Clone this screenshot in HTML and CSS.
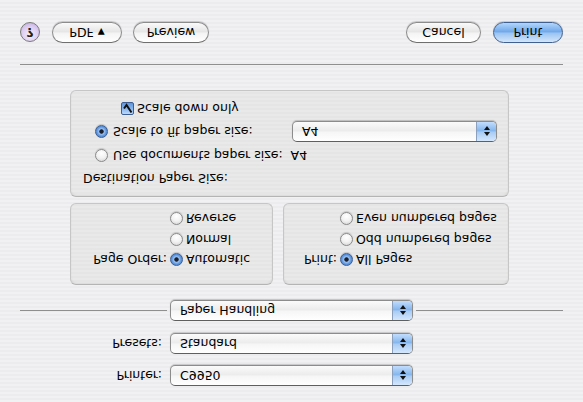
FILE: index.html
```html
<!DOCTYPE html>
<html>
<head>
<meta charset="utf-8">
<title>Print</title>
<link rel="stylesheet" href="styles.css">
</head>
<body>
<div class="dialog">
  <div class="fields">
    <div class="field">
      <span class="flabel">Printer:</span>
      <div class="popup"><span class="ptext">C9950</span><span class="parrow"><svg width="8" height="12" viewBox="0 0 8 12"><path d="M4 1 L7 5 L1 5 Z M4 11 L7 7 L1 7 Z" fill="#111"/></svg></span></div>
    </div>
    <div class="field presets">
      <span class="flabel">Presets:</span>
      <div class="popup"><span class="ptext">Standard</span><span class="parrow"><svg width="8" height="12" viewBox="0 0 8 12"><path d="M4 1 L7 5 L1 5 Z M4 11 L7 7 L1 7 Z" fill="#111"/></svg></span></div>
    </div>
    <div class="divider-row">
      <span class="hline"></span>
      <div class="popup"><span class="ptext">Paper Handling</span><span class="parrow"><svg width="8" height="12" viewBox="0 0 8 12"><path d="M4 1 L7 5 L1 5 Z M4 11 L7 7 L1 7 Z" fill="#111"/></svg></span></div>
      <span class="hline"></span>
    </div>
  </div>

  <div class="panels">
    <div class="panel-row">
      <div class="box order">
        <div class="opt-grid order-grid">
          <span class="glabel">Page Order:</span>
          <div class="opt"><span class="radio on"></span><span>Automatic</span></div>
          <span></span>
          <div class="opt"><span class="radio"></span><span>Normal</span></div>
          <span></span>
          <div class="opt"><span class="radio"></span><span>Reverse</span></div>
        </div>
      </div>
      <div class="box print">
        <div class="opt-grid print-grid">
          <span class="glabel">Print:</span>
          <div class="opt"><span class="radio on"></span><span>All Pages</span></div>
          <span></span>
          <div class="opt"><span class="radio"></span><span>Odd numbered pages</span></div>
          <span></span>
          <div class="opt"><span class="radio"></span><span>Even numbered pages</span></div>
        </div>
      </div>
    </div>
    <div class="box dest">
      <div class="dest-title">Destination Paper Size:</div>
      <div class="opt dest-opt"><span class="radio"></span><span>Use documents paper size:&nbsp; A4</span></div>
      <div class="opt dest-opt fit"><span class="radio on"></span><span>Scale to fit paper size:</span>
        <div class="popup small"><span class="ptext">A4</span><span class="parrow"><svg width="8" height="12" viewBox="0 0 8 12"><path d="M4 1 L7 5 L1 5 Z M4 11 L7 7 L1 7 Z" fill="#111"/></svg></span></div>
      </div>
      <div class="opt check-opt"><span class="checkbox"><svg width="11" height="11" viewBox="0 0 11 11"><path d="M2 5.5 L4.5 9 L9.5 1.5" fill="none" stroke="#111" stroke-width="2"/></svg></span><span>Scale down only</span></div>
    </div>
  </div>

  <div class="sep"></div>

  <div class="buttons">
    <span class="help">?</span>
    <span class="btn pdf">PDF <span class="tri">▼</span></span>
    <span class="btn preview">Preview</span>
    <span class="spacer"></span>
    <span class="btn cancel">Cancel</span>
    <span class="btn default">Print</span>
  </div>
</div>
</body>
</html>
```

FILE: styles.css
```css
html, body {
  margin: 0;
  padding: 0;
}

body {
  background: #efeff1;
}

.dialog {
  width: 583px;
  height: 402px;
  overflow: hidden;
  transform: scaleY(-1);
  background: repeating-linear-gradient(to bottom, #f1f1f3 0, #f1f1f3 2px, #ececee 2px, #ececee 4px);
  font-family: "DejaVu Sans", sans-serif;
  font-size: 12.5px;
  color: #000;
  display: flex;
  flex-direction: column;
}

.fields {
  padding-top: 16px;
  display: flex;
  flex-direction: column;
}

.field {
  display: flex;
  align-items: center;
  height: 21px;
}

.field.presets {
  margin-top: 11px;
}

.flabel {
  width: 162px;
  text-align: right;
  margin-right: 8px;
}

.popup {
  width: 243px;
  height: 21px;
  box-sizing: border-box;
  border: 1px solid #8c8c8c;
  border-top-color: #5f5f5f;
  border-radius: 5px;
  background: linear-gradient(to bottom, #ffffff 0%, #f6f6f6 45%, #ececec 55%, #fbfbfb 100%);
  box-shadow: 0 1px 1px rgba(0,0,0,0.18);
  display: flex;
  align-items: center;
  overflow: hidden;
}

.ptext {
  flex: 1;
  padding-left: 9px;
}

.parrow {
  width: 19px;
  height: 100%;
  border-left: 1px solid #8aa0bd;
  background: linear-gradient(to bottom, #d4e7fc 0%, #aacdf5 45%, #86b6ee 55%, #c2ddfd 100%);
  display: flex;
  align-items: center;
  justify-content: center;
}

.divider-row {
  margin: 12px 20px 0;
  display: flex;
  align-items: center;
  gap: 3px;
}

.hline {
  flex: 1;
  height: 1px;
  background: #8f8f8f;
}

.panels {
  margin: 15px 0 0 70px;
  width: 439px;
  display: flex;
  flex-direction: column;
  gap: 6px;
}

.panel-row {
  display: flex;
  gap: 10px;
  height: 82px;
}

.box {
  box-sizing: border-box;
  border: 1px solid #c6c6c6;
  border-top-color: #b4b4b4;
  border-radius: 6px;
  background: repeating-linear-gradient(to bottom, #e9e9ea 0, #e9e9ea 2px, #e5e5e6 2px, #e5e5e6 4px);
  box-shadow: inset 0 1px 2px rgba(0,0,0,0.07);
}

.box.order {
  width: 203px;
}

.box.print {
  flex: 1;
}

.opt-grid {
  display: grid;
  grid-auto-rows: 20.5px;
  align-items: center;
  padding-top: 14px;
}

.order-grid {
  grid-template-columns: 96px auto;
}

.print-grid {
  grid-template-columns: 53px auto;
}

.glabel {
  text-align: right;
}

.opt {
  display: flex;
  align-items: center;
  gap: 3px;
}

.order-grid .opt,
.print-grid .opt {
  margin-left: 3px;
}

.radio {
  width: 13px;
  height: 13px;
  box-sizing: border-box;
  border-radius: 50%;
  border: 1px solid #8a8a8a;
  background: radial-gradient(circle at 50% 70%, #ffffff 0%, #f2f2f2 50%, #cfcfcf 100%);
  box-shadow: 0 1px 1px rgba(0,0,0,0.15);
  flex: none;
}

.radio.on {
  border-color: #3b5f95;
  background: radial-gradient(circle at 50% 50%, #1a2030 0, #1a2030 1.8px, #9cc3f2 2.6px, #5d95dd 60%, #3f78c9 100%);
}

.box.dest {
  height: 107px;
  padding: 10px 0 0 12px;
  display: flex;
  flex-direction: column;
}

.dest-title {
  height: 16px;
  line-height: 16px;
}

.dest-opt {
  margin-left: 12px;
  height: 21px;
  margin-top: 4px;
  gap: 5px;
}

.dest-opt.fit {
  margin-top: 3px;
}

.popup.small {
  width: 205px;
  margin-left: auto;
  margin-right: 11px;
}

.check-opt {
  margin-left: 38px;
  margin-top: 2px;
  height: 20px;
  gap: 3px;
}

.checkbox {
  width: 13px;
  height: 13px;
  box-sizing: border-box;
  border: 1px solid #3b5f95;
  border-radius: 2px;
  background: linear-gradient(to bottom, #bcd8fa 0%, #86b4ec 50%, #5e95dc 100%);
  display: flex;
  align-items: center;
  justify-content: center;
}

.sep {
  margin: 25px 20px 0;
  height: 1px;
  background: #8f8f8f;
}

.buttons {
  margin: 21px 20px 0;
  display: flex;
  align-items: center;
  height: 21px;
}

.help {
  width: 20px;
  height: 20px;
  box-sizing: border-box;
  border-radius: 50%;
  border: 1px solid #7a7a7a;
  background: radial-gradient(circle at 50% 35%, #f4eefc 0%, #dccdf0 55%, #b9a3dc 100%);
  display: flex;
  align-items: center;
  justify-content: center;
  font-weight: bold;
  font-size: 13px;
  color: #222;
}

.btn {
  height: 21px;
  box-sizing: border-box;
  border: 1px solid #8c8c8c;
  border-top-color: #6f6f6f;
  border-radius: 11px;
  background: linear-gradient(to bottom, #ffffff 0%, #f4f4f4 45%, #e6e6e6 55%, #fafafa 100%);
  box-shadow: 0 1px 1px rgba(0,0,0,0.18);
  display: flex;
  align-items: center;
  justify-content: center;
}

.tri {
  font-size: 9px;
  margin-left: 4px;
}

.pdf {
  width: 70px;
  margin-left: 12px;
}

.preview {
  width: 76px;
  margin-left: 11px;
}

.spacer {
  flex: 1;
}

.cancel {
  width: 75px;
}

.default {
  width: 70px;
  margin-left: 12px;
  border-color: #40608f;
  background: linear-gradient(to bottom, #d4e6fb 0%, #9cc5f2 45%, #72a9ea 55%, #b2d6fb 100%);
}
```
